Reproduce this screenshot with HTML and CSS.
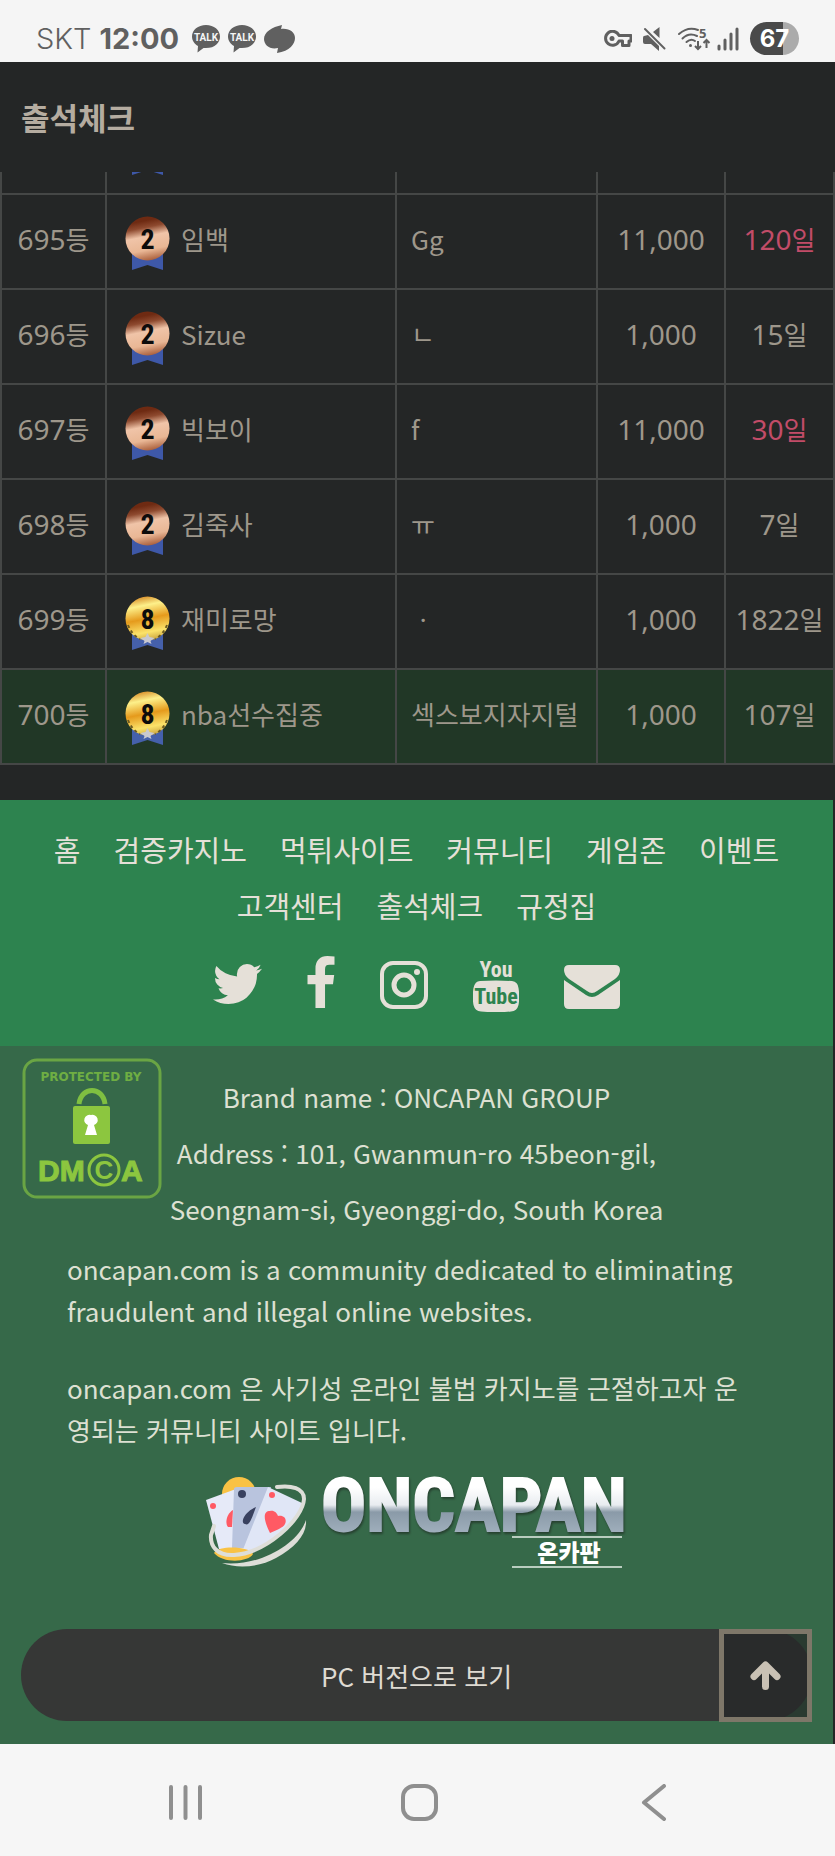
FILE: index.html
```html
<!DOCTYPE html>
<html lang="ko">
<head>
    <meta charset="UTF-8">
    <meta name="viewport" content="width=device-width, initial-scale=1.0">
    <title>출석체크</title>
    <link rel="stylesheet" href="styles.css">
</head>
<body>

    <!-- shared medal shapes -->
    <svg class="defs" width="0" height="0" aria-hidden="true">
        <defs>
            <linearGradient id="bronze" x1="0.4" y1="0" x2="0.6" y2="1">
                <stop offset="0.1" stop-color="#6e2a12"/>
                <stop offset="0.25" stop-color="#8e4a2f"/>
                <stop offset="0.45" stop-color="#f0c4a8"/>
                <stop offset="0.75" stop-color="#e9b795"/>
                <stop offset="1" stop-color="#a85c38"/>
            </linearGradient>
            <linearGradient id="gold" x1="0.4" y1="0" x2="0.6" y2="1">
                <stop offset="0" stop-color="#d9912c"/>
                <stop offset="0.2" stop-color="#fdf08a"/>
                <stop offset="0.5" stop-color="#e59a1c"/>
                <stop offset="0.8" stop-color="#fbe36a"/>
                <stop offset="1" stop-color="#c9a23c"/>
            </linearGradient>
            <symbol id="medal-2" viewBox="0 0 45 54">
                <path d="M7 36h31v18l-15.500-5L7 54z" fill="#3e58a8"/>
                <circle cx="22.500" cy="22.500" r="22" fill="url(#bronze)"/>
                <text x="22.500" y="33" class="medal-num">2</text>
            </symbol>
            <symbol id="medal-8" viewBox="0 0 45 54">
                <path d="M7 36h31v18l-15.500-5L7 54z" fill="#4560ab"/>
                <circle cx="22.500" cy="22.500" r="22" fill="url(#gold)"/>
                <path d="M3 29q4 10 12 14M42 29q-4 10-12 14" fill="none" stroke="#6b5a20" stroke-width="2" stroke-dasharray="3 3"/>
                <path d="M22.500 37l2 4 5 1-4 3 1 3-4-2-4 2 1-3-4-3 5-1z" fill="#c8c8d0"/>
                <text x="22.500" y="33" class="medal-num">8</text>
            </symbol>
            <symbol id="talk" viewBox="0 0 28 28">
                <path d="M14 0C6 0 0 5 0 11.500c0 4 2.500 7.500 6 9.500L5.500 27.500l6-4.500c11 1 16.500-5 16.500-11.500C28 5 22 0 14 0z" fill="#606060"/>
                <text x="14" y="16" class="talk-text">TALK</text>
            </symbol>
        </defs>
    </svg>

    <div class="status-bar">
        <div class="status-left">
            <span class="carrier">SKT</span>
            <span class="time">12:00</span>
            <div class="notices">
                <svg width="28" height="28"><use href="#talk"/></svg>
                <svg width="28" height="28"><use href="#talk"/></svg>
                <svg width="31" height="28" viewBox="0 0 31 28"><path d="M18 0l-1 4c8-1 14 3 14 9 0 6-5 13-18 15l1-5C6 25 0 20 0 14 0 7 8 2 18 0z" fill="#606060"/></svg>
            </div>
        </div>
        <div class="status-right">
            <svg width="28" height="18" viewBox="0 0 28 18">
                <path d="M15 5.500h12v5.500h-2v4.500h-6.500V11H15a7 7 0 1 1 0-5.500z" fill="none" stroke="#606060" stroke-width="3" stroke-linejoin="round"/>
                <circle cx="8" cy="8.500" r="2.500" fill="#606060"/>
            </svg>
            <svg class="mute" width="23" height="24" viewBox="0 0 23 24">
                <path d="M10 5l6.500-5v11zM1 9l4-1 11 11v5l-8-7H2q-2 0-2-2v-4q0-2 1-2z" fill="#606060"/>
                <path d="M2 2l19.500 19.500" stroke="#606060" stroke-width="2" stroke-linecap="round"/>
            </svg>
            <svg class="wifi" width="33" height="24" viewBox="0 0 33 24">
                <path d="M1 7Q10-1 20 3M4.500 11.500Q11 5 19 9M8.500 15Q13 11 17 14" fill="none" stroke="#606060" stroke-width="2" stroke-linecap="round"/>
                <circle cx="12.500" cy="18.500" r="1.500" fill="#606060"/>
                <path d="M20 14v8M17 19l3 3 3-3M28.500 21v-8M25.500 16l3-3 3 3" fill="none" stroke="#606060" stroke-width="2"/>
                <text x="21" y="11" class="wifi-text">5</text>
            </svg>
            <svg class="signal" width="22" height="24" viewBox="0 0 22 24">
                <path d="M2 19v3M8 13v9M14 7v15M20 2v20" stroke="#606060" stroke-width="3" stroke-linecap="round"/>
            </svg>
            <span class="battery">67</span>
        </div>
    </div>

    <header class="page-header">
        <h1>출석체크</h1>
    </header>

    <main class="rank-list">
        <table class="rank-table">
            <colgroup>
                <col class="col-rank">
                <col class="col-name">
                <col class="col-comment">
                <col class="col-point">
                <col class="col-days">
            </colgroup>
            <tr>
                <td></td>
                <td class="name"><div class="user"><svg class="medal"><use href="#medal-2"/></svg></div></td>
                <td></td>
                <td></td>
                <td></td>
            </tr>
            <tr>
                <td>695<span class="unit">등</span></td>
                <td class="name"><div class="user"><svg class="medal"><use href="#medal-2"/></svg>임백</div></td>
                <td class="comment">Gg</td>
                <td>11,000</td>
                <td class="hot">120<span class="unit">일</span></td>
            </tr>
            <tr>
                <td>696<span class="unit">등</span></td>
                <td class="name"><div class="user"><svg class="medal"><use href="#medal-2"/></svg>Sizue</div></td>
                <td class="comment">ㄴ</td>
                <td>1,000</td>
                <td>15<span class="unit">일</span></td>
            </tr>
            <tr>
                <td>697<span class="unit">등</span></td>
                <td class="name"><div class="user"><svg class="medal"><use href="#medal-2"/></svg>빅보이</div></td>
                <td class="comment">f</td>
                <td>11,000</td>
                <td class="hot">30<span class="unit">일</span></td>
            </tr>
            <tr>
                <td>698<span class="unit">등</span></td>
                <td class="name"><div class="user"><svg class="medal"><use href="#medal-2"/></svg>김죽사</div></td>
                <td class="comment">ㅠ</td>
                <td>1,000</td>
                <td>7<span class="unit">일</span></td>
            </tr>
            <tr>
                <td>699<span class="unit">등</span></td>
                <td class="name"><div class="user"><svg class="medal"><use href="#medal-8"/></svg>재미로망</div></td>
                <td class="comment">ㆍ</td>
                <td>1,000</td>
                <td>1822<span class="unit">일</span></td>
            </tr>
            <tr class="mine">
                <td>700<span class="unit">등</span></td>
                <td class="name"><div class="user"><svg class="medal"><use href="#medal-8"/></svg>nba선수집중</div></td>
                <td class="comment">섹스보지자지털</td>
                <td>1,000</td>
                <td>107<span class="unit">일</span></td>
            </tr>
        </table>
    </main>

    <footer class="footer">
        <div class="footer-top">
            <nav class="menu">
                <a href="#">홈</a>
                <a href="#">검증카지노</a>
                <a href="#">먹튀사이트</a>
                <a href="#">커뮤니티</a>
                <a href="#">게임존</a>
                <a href="#">이벤트</a>
                <a href="#">고객센터</a>
                <a href="#">출석체크</a>
                <a href="#">규정집</a>
            </nav>
            <div class="social">
                <a href="#" aria-label="Twitter">
                    <svg width="49" height="56" viewBox="108 0 1576 1792"><path d="M1684 408q-67 98-162 167 1 14 1 42 0 130-38 259.500t-115.500 248.500-184.500 210.500-258 146-323 54.500q-271 0-496-145 35 4 78 4 225 0 401-138-105-2-188-64.500t-114-159.500q33 5 61 5 43 0 85-11-112-23-185.500-111.500t-73.500-205.500v-4q68 38 146 41-66-44-105-115t-39-154q0-88 44-163 121 149 294.500 238.500t371.500 99.500q-8-38-8-74 0-134 94.500-228.500t228.500-94.500q140 0 236 102 109-21 205-78-37 115-142 178 93-10 186-50z"/></svg>
                </a>
                <a href="#" aria-label="Facebook">
                    <svg width="28" height="56" viewBox="463 0 896 1792"><path d="M1343 12v264h-157q-86 0-116 36t-30 108v189h293l-39 296h-254v759h-306v-759h-255v-296h255v-218q0-186 104-288.500t277-102.500q147 0 228 12z"/></svg>
                </a>
                <a href="#" aria-label="Instagram">
                    <svg width="48" height="56" viewBox="0 0 48 56">
                        <rect x="2" y="7" width="44" height="44" rx="11" fill="none" stroke="#e5e0d8" stroke-width="4"/>
                        <circle cx="24" cy="29" r="10" fill="none" stroke="#e5e0d8" stroke-width="5"/>
                        <circle cx="37" cy="16" r="3"/>
                    </svg>
                </a>
                <a href="#" aria-label="YouTube">
                    <svg width="46" height="56" viewBox="0 0 46 56">
                        <text x="23" y="21" class="you-text">You</text>
                        <path d="M7 25Q23 24 39 25 45 26 45.500 32 47 41 45.500 49 44 55 38 55.500 23 57 8 55.500 2 55 .5 49-1 41 .5 32 2 25 7 25z"/>
                        <text x="23" y="48" class="tube-text">Tube</text>
                    </svg>
                </a>
                <a href="#" aria-label="E-mail">
                    <svg width="56" height="56" viewBox="0 0 56 56">
                        <path d="M5 9h46q5 0 5 5 0 5-5 9L33 35q-5 4-10 0L5 23q-5-4-5-9 0-5 5-5z"/>
                        <path d="M0 24l22 15q6 4 12 0l22-15v24q0 5-5 5H5q-5 0-5-5z"/>
                    </svg>
                </a>
            </div>
        </div>

        <div class="footer-info">
            <svg class="dmca" viewBox="0 0 140 141" role="img" aria-label="DMCA">
                <rect x="2" y="2" width="136" height="137" rx="13" fill="none" stroke="#6aa544" stroke-width="3"/>
                <text x="69" y="23" class="dmca-small">PROTECTED BY</text>
                <path d="M57 46c2-18 24-18 26 0" fill="none" stroke="#7fbf41" stroke-width="5"/>
                <rect x="51" y="48" width="37" height="38" rx="2" fill="#8cc63f"/>
                <path d="M69 57a5 5 0 0 1 3 10l3 10H63l3-10a5 5 0 0 1 3-10z" fill="#fff"/>
                <text x="16" y="123" class="dmca-big">DM</text>
                <circle cx="82" cy="112" r="15" fill="none" stroke="#8cc63f" stroke-width="3"/>
                <text x="82" y="121" class="dmca-c">C</text>
                <text x="99" y="123" class="dmca-big">A</text>
            </svg>
            <address class="address">
                Brand name : ONCAPAN GROUP<br>
                Address : 101, Gwanmun-ro 45beon-gil,<br>
                Seongnam-si, Gyeonggi-do, South Korea
            </address>
            <p>oncapan.com is a community dedicated to eliminating fraudulent and illegal online websites.</p>
            <p>oncapan.com 은 사기성 온라인 불법 카지노를 근절하고자 운영되는 커뮤니티 사이트 입니다.</p>

            <svg class="logo" width="430" height="100" viewBox="20 12 430 100" role="img" aria-label="ONCAPAN">
                <defs>
                    <linearGradient id="silver" x1="0" y1="0" x2="0" y2="1">
                        <stop offset="0.3" stop-color="#ffffff"/>
                        <stop offset="0.5" stop-color="#e8ecf0"/>
                        <stop offset="0.58" stop-color="#8a9aa8"/>
                        <stop offset="0.85" stop-color="#a3b2bf"/>
                    </linearGradient>
                </defs>
                <!-- coin and three cards -->
                <circle cx="57" cy="34" r="17" fill="#f9c244"/>
                <path d="M24 40l30-11 16 60-33 0z" fill="#e6eaf8"/>
                <path d="M52 29q0-2 3-2h34L74 88H50z" fill="#b9c4de"/>
                <path d="M86 27l34 16q2 1 1 3-10 24-44 43l-17 3z" fill="#e0e6f6"/>
                <circle cx="31" cy="46" r="3" fill="#ff5a64"/>
                <circle cx="60" cy="34" r="4" fill="#39415f"/>
                <circle cx="90" cy="35" r="3" fill="#ff5a64"/>
                <path d="M51 50c-7 4-8 14-5 17h4z" fill="#ff5a64"/>
                <path d="M74 47c-12 5-16 16-11 17 4 2 6-4 8-9z" fill="#39415f"/>
                <path d="M88 73c-7-14-7-22 0-22 4-1 7 2 8 5 7-1 9 4 7 8-2 4-9 6-15 9z" fill="#ff5a64"/>
                <path d="M32 93c4-8 36-7 39 1-4 8-30 10-39-1z" fill="#f9c244"/>
                <!-- swoosh -->
                <path d="M95 27c14-2 27 1 27 12-1 20-38 54-70 56-17 1-24-9-23-20l3-9" fill="none" stroke="#deded8" stroke-width="4" stroke-linecap="round"/>
                <path d="M124 60c-8 24-46 47-84 43 16 6 38 4 54-5 20-11 31-24 30-38z" fill="#deded8"/>
                <text x="139" y="71" class="logo-text">ONCAPAN</text>
                <path d="M330 77h110M330 107h110" stroke="#b9cdbf" stroke-width="2"/>
                <text x="387" y="101" class="logo-sub">온카판</text>
            </svg>

            <div class="bottom-bar">
                <button class="pc-button" type="button">PC 버전으로 보기</button>
                <button class="top-button" type="button" aria-label="위로">
                    <svg width="31" height="29" viewBox="0 0 31 29"><path d="M15.500 25.500V5M4 15.500L15.500 4 27 15.500" fill="none" stroke="#c9c1b4" stroke-width="7" stroke-linecap="round" stroke-linejoin="round"/></svg>
                </button>
            </div>
        </div>
    </footer>

    <div class="nav-bar">
        <button type="button" aria-label="최근 앱"><svg width="37" height="37" viewBox="0 0 37 37"><path d="M4 3v31M18.500 3v31M33 3v31"/></svg></button>
        <button type="button" aria-label="홈 화면"><svg width="37" height="37" viewBox="0 0 37 37"><rect x="2" y="2" width="33" height="33" rx="11"/></svg></button>
        <button type="button" aria-label="뒤로"><svg width="37" height="37" viewBox="0 0 37 37"><path d="M29 2L9 18.500 29 35"/></svg></button>
    </div>

</body>
</html>
```
FILE: styles.css
```css
* {
    box-sizing: border-box;
}

body {
    margin: 0;
    background-color: #242626;
    color: #9e978b;
    font-family: "Noto Sans CJK KR", sans-serif;
    font-size: 26px;
}

.defs {
    position: absolute;
}

svg {
    display: block;
}

a {
    color: inherit;
    text-decoration: none;
}

button {
    border: none;
    background: none;
    padding: 0;
    font-family: inherit;
    cursor: pointer;
}

/* status bar */
.status-bar {
    display: flex;
    justify-content: space-between;
    height: 62px;
    padding: 15px 36px 0;
    background-color: #f5f5f5;
    color: #606060;
    font-family: Inter, sans-serif;
}

.status-left,
.status-right,
.notices {
    display: flex;
    align-items: center;
}

.carrier {
    font-size: 29px;
    font-weight: 300;
}

.time {
    margin: 0 13px 0 8px;
    font-size: 29px;
    font-weight: 700;
}

.notices {
    gap: 8px;
}

.mute {
    margin-left: 11px;
}

.wifi {
    margin-left: 12px;
    overflow: visible;
}

.signal {
    margin: 0 11px 0 6px;
}

.battery {
    width: 49px;
    border-radius: 17px;
    background: linear-gradient(to right, #4a4a4a 67%, #ababab 67%);
    color: #fff;
    font-size: 24px;
    font-weight: 700;
    line-height: 33px;
    text-align: center;
}

.talk-text {
    fill: #f5f5f5;
    font: 700 10px Roboto, sans-serif;
    text-anchor: middle;
}

.wifi-text {
    fill: #606060;
    font: 700 13px "Open Sans", sans-serif;
}

/* header */
.page-header {
    display: flex;
    align-items: center;
    height: 110px;
    padding: 0 21px 2px;
}

.page-header h1 {
    margin: 0;
    color: #b5aca0;
    font-size: 31px;
    font-weight: 700;
}

/* ranking table, scrolled under the header */
.rank-list {
    overflow: hidden;
    padding-bottom: 35px;
}

.rank-table {
    width: 100%;
    margin-top: -74px;
    border-collapse: collapse;
    table-layout: fixed;
    font-family: "Noto Sans", "Noto Sans CJK KR", sans-serif;
    font-size: 28px;
}

.col-rank {
    width: 105px;
}

.col-comment {
    width: 201px;
}

.col-point {
    width: 128px;
}

.col-days {
    width: 109px;
}

.rank-table td {
    height: 95px;
    padding: 0 0 6px;
    border: 2px solid #454746;
    line-height: 36px;
    text-align: center;
    white-space: nowrap;
}

.rank-table .name,
.rank-table .comment,
.unit {
    font-family: "Noto Sans CJK KR", sans-serif;
    font-size: 26px;
}

.rank-table .name,
.rank-table .comment {
    padding-left: 14px;
    text-align: left;
}

.rank-table .name {
    padding-left: 18px;
}

.user {
    display: flex;
    align-items: center;
    gap: 11px;
}

.medal {
    width: 45px;
    height: 54px;
    margin-top: 9px;
}

.medal-num {
    fill: #0c0c0c;
    font: 700 28px "Roboto Condensed", Roboto, sans-serif;
    text-anchor: middle;
}

.rank-table .hot {
    color: #c24c68;
}

.mine {
    background-color: #213726;
}

/* footer */
.footer {
    margin-right: 2px;
    color: #dde0d2;
}

.footer-top {
    padding: 21px 40px 34px;
    background-color: #2d834f;
    color: #e5e0d8;
}

.menu {
    display: flex;
    flex-wrap: wrap;
    justify-content: center;
    column-gap: 33px;
    font-size: 29px;
    line-height: 56px;
}

.social {
    display: flex;
    justify-content: center;
    gap: 45px;
    margin-top: 23px;
    fill: #e5e0d8;
}

.you-text,
.tube-text {
    font: 700 22px "Liberation Sans Narrow", "Roboto Condensed", Roboto, sans-serif;
    text-anchor: middle;
}

.tube-text {
    fill: #2d834f;
}

.footer-info {
    position: relative;
    padding: 23px 21px;
    background-color: #366949;
}

.dmca {
    position: absolute;
    top: 12px;
    left: 22px;
    width: 140px;
}

.dmca-small {
    fill: #6fae43;
    font: 700 12px "DejaVu Sans", sans-serif;
    text-anchor: middle;
}

.dmca-big {
    fill: #8cc63f;
    stroke: #8cc63f;
    font: 700 30px "Liberation Sans", sans-serif;
}

.dmca-c {
    fill: #8cc63f;
    font: 700 26px "Liberation Sans", sans-serif;
    text-anchor: middle;
}

.address {
    margin-bottom: 11px;
    font-size: 26px;
    font-style: normal;
    line-height: 56px;
    text-align: center;
}

.footer-info p {
    margin: 0 60px 35px 46px;
    font-size: 26px;
    line-height: 42px;
}

.logo {
    margin: -14px auto 57px;
}

.logo-text {
    fill: url(#silver);
    stroke: url(#silver);
    stroke-width: 2px;
    filter: drop-shadow(1px 2px 1px #26402f);
    font: 700 75px "Liberation Sans Narrow", "Roboto Condensed", Roboto, sans-serif;
}

.logo-sub {
    fill: #fff;
    font: 900 23px "Noto Sans CJK KR", sans-serif;
    text-anchor: middle;
}

.bottom-bar {
    position: relative;
}

.pc-button {
    display: block;
    width: 100%;
    height: 92px;
    border-radius: 46px;
    background-color: #363736;
    color: #dedad2;
    font-size: 26px;
}

.top-button {
    position: absolute;
    top: 0;
    right: 0;
    display: flex;
    align-items: center;
    justify-content: center;
    width: 93px;
    height: 93px;
    border: 5px solid #7e7769;
    background-color: rgba(36, 38, 38, 0.7);
}

/* system navigation */
.nav-bar {
    display: flex;
    align-items: center;
    justify-content: center;
    gap: 197px;
    height: 112px;
    padding: 5px 0 0 4px;
    background-color: #f6f6f6;
}

.nav-bar svg {
    fill: none;
    stroke: #8f8f8f;
    stroke-width: 4;
    stroke-linecap: round;
    stroke-linejoin: round;
}
```
